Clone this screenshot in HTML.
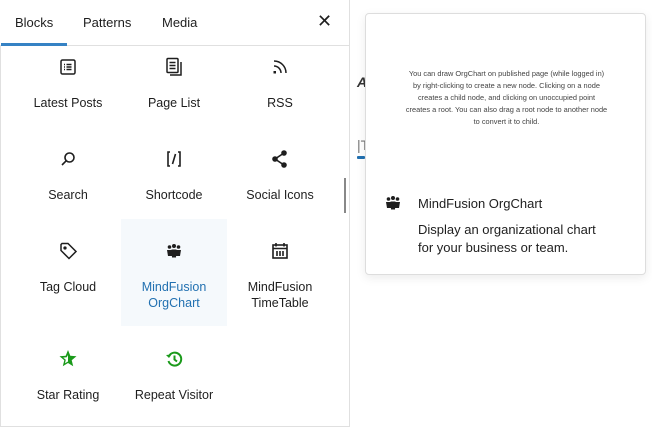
<!DOCTYPE html>
<html><head><meta charset="utf-8"><style>
*{margin:0;padding:0;box-sizing:border-box}
body{width:652px;height:427px;background:#fff;font-family:"Liberation Sans",sans-serif;position:relative;overflow:hidden;color:#1e1e1e}
.panel{position:absolute;left:0;top:0;width:350px;height:427px;border:1px solid #e0e0e0}
.tabs{position:absolute;left:0;top:0;width:349px;height:46px;border-bottom:1px solid #e0e0e0;background:#fff;z-index:2}
.tab{position:absolute;top:15px;font-size:13px}
.ul{position:absolute;left:1px;top:43px;width:66px;height:3px;background:#3582c4}
.x{position:absolute;left:317px;top:11px;font-size:18px}
.cell{position:absolute;width:106px;text-align:center;font-size:12.5px;line-height:16px}
.cell svg{position:absolute;left:41px;top:20px;width:24px;height:24px}
.cell .l{position:absolute;left:0;width:106px;top:60px}
.hl{background:#f5f9fc;color:#2271b1}
.pop{position:absolute;left:365px;top:13px;width:281px;height:262px;border:1px solid #ddd;border-radius:4px;background:#fff;box-shadow:0 3px 10px rgba(0,0,0,.08)}
.desc{position:absolute;left:0;width:281px;top:54px;text-align:center;font-size:7.4px;line-height:12px;color:#444}
</style></head><body>
<div class="panel"></div>
<div class="tabs">
<span class="tab" style="left:15px">Blocks</span>
<span class="tab" style="left:83px">Patterns</span>
<span class="tab" style="left:162px">Media</span>
<span class="x">✕</span>
<div class="ul"></div>
</div>
<div style="position:absolute;left:344px;top:178px;width:2px;height:35px;background:#888"></div>

<div class="cell" style="left:15px;top:35px"><svg viewBox="0 0 24 24" fill="none" stroke="#1e1e1e" stroke-width="1.5"><rect x="5" y="5" width="14" height="14" rx="1.5"/><path d="M8 9.5h1M10.5 9.5h5M8 12h1M10.5 12h5M8 14.5h1M10.5 14.5h5"/></svg><div class="l">Latest Posts</div></div>
<div class="cell" style="left:121px;top:35px"><svg viewBox="0 0 24 24" fill="none" stroke="#1e1e1e" stroke-width="1.5"><rect x="5" y="3.5" width="11" height="14" rx="1"/><path d="M7.5 7.5h6M7.5 10.5h6M7.5 13.5h6M19 7v13H8"/></svg><div class="l">Page List</div></div>
<div class="cell" style="left:227px;top:35px"><svg viewBox="0 0 24 24" fill="none" stroke="#1e1e1e" stroke-width="1.5"><path d="M6 11a7 7 0 017 7M6 6a12 12 0 0112 12"/><rect x="5.5" y="16" width="2.5" height="2.5" fill="#1e1e1e" stroke="none"/></svg><div class="l">RSS</div></div>

<div class="cell" style="left:15px;top:127px"><svg viewBox="0 0 24 24" fill="none" stroke="#1e1e1e" stroke-width="1.6"><circle cx="13.5" cy="10.5" r="4.5"/><path d="M10.3 13.7L6 18"/></svg><div class="l">Search</div></div>
<div class="cell" style="left:121px;top:127px"><svg viewBox="0 0 24 24" fill="none" stroke="#1e1e1e" stroke-width="1.6"><path d="M8 5H6v14h2M16 5h2v14h-2M13.5 7l-3 10"/></svg><div class="l">Shortcode</div></div>
<div class="cell" style="left:227px;top:127px"><svg viewBox="0 0 24 24" fill="#1e1e1e" stroke="#1e1e1e" stroke-width="1.6"><path d="M16 6l-9 6 9 6" fill="none"/><circle cx="16" cy="6" r="2"/><circle cx="7" cy="12" r="2"/><circle cx="16" cy="18" r="2"/></svg><div class="l">Social Icons</div></div>

<div class="cell" style="left:15px;top:219px;height:107px"><svg viewBox="0 0 24 24" fill="none" stroke="#1e1e1e" stroke-width="1.5"><path d="M5 5.5v6l8 8 7-7-8-8H6z"/><circle cx="9" cy="9" r=".9" fill="#1e1e1e"/></svg><div class="l">Tag Cloud</div></div>
<div class="cell hl" style="left:121px;top:219px;height:107px"><svg viewBox="0 0 24 24" fill="#1e1e1e"><circle cx="7.5" cy="8" r="1.8"/><circle cx="12" cy="7" r="2"/><circle cx="16.5" cy="8" r="1.8"/><path d="M5 11h5v6H6zM9.5 10.5h5l-.5 8h-4zM14 11h5l-1 6h-4z"/></svg><div class="l">MindFusion<br>OrgChart</div></div>
<div class="cell" style="left:227px;top:219px;height:107px"><svg viewBox="0 0 24 24" fill="none" stroke="#1e1e1e" stroke-width="1.6"><rect x="5" y="6" width="14" height="13"/><path d="M5 9.5h14M8 4v3.5M16 4v3.5M9 12v5M12 12v5M15 12v5" /></svg><div class="l">MindFusion<br>TimeTable</div></div>

<div class="cell" style="left:15px;top:327px"><svg viewBox="0 0 24 24" fill="#1a9a1a"><path d="M12 3l2.3 5.8 6.2.4-4.8 4 1.5 6.1L12 16l-5.2 3.3 1.5-6.1-4.8-4 6.2-.4z"/><path d="M12 8v6.5l-3 1.8.8-3.5-2.6-2.2 3.5-.3z" fill="#fff"/></svg><div class="l">Star Rating</div></div>
<div class="cell" style="left:121px;top:327px"><svg viewBox="0 0 24 24" fill="none" stroke="#1a9a1a" stroke-width="2"><path d="M7 9a6.5 6.5 0 11-.5 5"/><path d="M12.5 8.5v4l2.5 2"/><path d="M4 8l3 3 2.5-3.5z" fill="#1a9a1a" stroke="none"/></svg><div class="l">Repeat Visitor</div></div>

<div style="position:absolute;left:357px;top:74px;font-size:14px;font-weight:bold;font-style:italic;color:#333">A</div>
<div style="position:absolute;left:357px;top:137px;font-size:14px;color:#777">|T</div>
<div style="position:absolute;left:357px;top:156px;width:8px;height:3px;background:#2271b1;border-radius:1px"></div>

<div class="pop">
<div class="desc">You can draw OrgChart on published page (while logged in)<br>by right-clicking to create a new node. Clicking on a node<br>creates a child node, and clicking on unoccupied point<br>creates a root. You can also drag a root node to another node<br>to convert it to child.</div>
<svg style="position:absolute;left:15px;top:177px" width="24" height="24" viewBox="0 0 24 24" fill="#1e1e1e"><circle cx="7.5" cy="8" r="1.8"/><circle cx="12" cy="7" r="2"/><circle cx="16.5" cy="8" r="1.8"/><path d="M5 11h5v6H6zM9.5 10.5h5l-.5 8h-4zM14 11h5l-1 6h-4z"/></svg>
<div style="position:absolute;left:52px;top:182px;font-size:13px">MindFusion OrgChart</div>
<div style="position:absolute;left:52px;top:207px;font-size:13px;line-height:18px">Display an organizational chart<br>for your business or team.</div>
</div>
</body></html>
